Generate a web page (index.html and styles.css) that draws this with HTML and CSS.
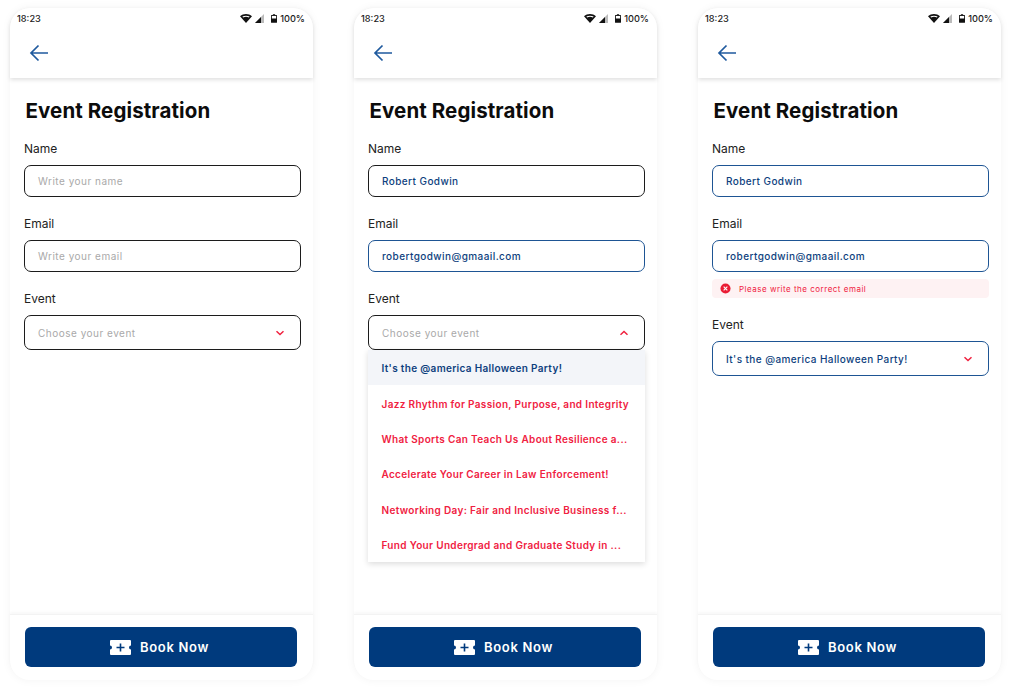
FILE: index.html
```html
<!DOCTYPE html>
<html lang="en">
<head>
<meta charset="utf-8">
<title>Event Registration</title>
<link rel="stylesheet" href="styles.css">
</head>
<body>
<svg class="defs" width="0" height="0" aria-hidden="true">
  <symbol id="wifi" viewBox="0 0 12 9"><path d="M0 2.2C3.4-.7 8.6-.7 12 2.2L6 9z" fill="#111"/><path d="M2.400 2.600c2.200-1.200 5-1.200 7.200 0l-.7.800C7 2.600 5 2.600 3.100 3.400z" fill="#fff"/></symbol>
  <symbol id="signal" viewBox="0 0 9 9"><path d="M9 0v9H0z" fill="#bbb"/><path d="M6 3v6H0z" fill="#111"/></symbol>
  <symbol id="battery" viewBox="0 0 7 10"><path d="M2.200 0h2.600v1H6.300a.7.7 0 0 1 .7.700v7.600a.7.7 0 0 1-.7.700H.7A.7.7 0 0 1 0 9.300V1.700A.7.7 0 0 1 .7 1h1.500z" fill="#111"/><rect x="1" y="2" width="5" height="3" fill="#fff"/></symbol>
  <symbol id="ticket" viewBox="0 0 21 15"><path d="M1 0h19a1 1 0 0 1 1 1v4.500a2 2 0 0 0 0 4V14a1 1 0 0 1-1 1H1a1 1 0 0 1-1-1V9.500a2 2 0 0 0 0-4V1a1 1 0 0 1 1-1z" fill="#fff"/><path d="M10.500 3.500v8M6.500 7.500h8" stroke="#003a7d" stroke-width="1.600" fill="none"/></symbol>
  <symbol id="back" viewBox="0 0 20 18"><path d="M19 9H2M9.500 1.500 2 9l7.500 7.500" stroke="#1f5a9e" stroke-width="1.700" fill="none"/></symbol>
  <symbol id="down" viewBox="0 0 10 6"><path d="M1.500 1.200 5 4.500 8.500 1.200" stroke="#f0213f" stroke-width="1.500" fill="none"/></symbol>
  <symbol id="up" viewBox="0 0 10 6"><path d="M1.500 4.800 5 1.500 8.500 4.800" stroke="#f0213f" stroke-width="1.500" fill="none"/></symbol>
  <symbol id="err" viewBox="0 0 12 12"><circle cx="6" cy="6" r="5.500" fill="#ea1c34"/><path d="M4 4l4 4M8 4l-4 4" stroke="#fff" stroke-width="1.200"/></symbol>
</svg>

<main class="screens">

  <section class="phone">
    <div class="top">
      <div class="status"><span>18:23</span><span class="status-icons"><svg class="i-wifi"><use href="#wifi"/></svg><svg class="i-signal"><use href="#signal"/></svg><svg class="i-bat"><use href="#battery"/></svg><span>100%</span></span></div>
      <div class="nav"><svg class="i-back"><use href="#back"/></svg></div>
    </div>
    <div class="body">
      <h1>Event Registration</h1>
      <div class="field"><div class="label">Name</div><div class="input"><span class="ph">Write your name</span></div></div>
      <div class="field"><div class="label">Email</div><div class="input"><span class="ph">Write your email</span></div></div>
      <div class="field"><div class="label">Event</div><div class="input select"><span class="ph">Choose your event</span><svg class="i-chev"><use href="#down"/></svg></div></div>
    </div>
    <div class="foot"><div class="btn"><svg class="i-ticket"><use href="#ticket"/></svg><span>Book Now</span></div></div>
  </section>

  <section class="phone">
    <div class="top">
      <div class="status"><span>18:23</span><span class="status-icons"><svg class="i-wifi"><use href="#wifi"/></svg><svg class="i-signal"><use href="#signal"/></svg><svg class="i-bat"><use href="#battery"/></svg><span>100%</span></span></div>
      <div class="nav"><svg class="i-back"><use href="#back"/></svg></div>
    </div>
    <div class="body">
      <h1>Event Registration</h1>
      <div class="field"><div class="label">Name</div><div class="input"><span class="val">Robert Godwin</span></div></div>
      <div class="field"><div class="label">Email</div><div class="input blue"><span class="val">robertgodwin@gmaail.com</span></div></div>
      <div class="field drop-wrap"><div class="label">Event</div><div class="input select"><span class="ph">Choose your event</span><svg class="i-chev"><use href="#up"/></svg></div>
        <ul class="drop">
          <li class="on">It's the @america Halloween Party!</li>
          <li>Jazz Rhythm for Passion, Purpose, and Integrity</li>
          <li>What Sports Can Teach Us About Resilience a...</li>
          <li>Accelerate Your Career in Law Enforcement!</li>
          <li>Networking Day: Fair and Inclusive Business f...</li>
          <li>Fund Your Undergrad and Graduate Study in ...</li>
        </ul>
      </div>
    </div>
    <div class="foot"><div class="btn"><svg class="i-ticket"><use href="#ticket"/></svg><span>Book Now</span></div></div>
  </section>

  <section class="phone">
    <div class="top">
      <div class="status"><span>18:23</span><span class="status-icons"><svg class="i-wifi"><use href="#wifi"/></svg><svg class="i-signal"><use href="#signal"/></svg><svg class="i-bat"><use href="#battery"/></svg><span>100%</span></span></div>
      <div class="nav"><svg class="i-back"><use href="#back"/></svg></div>
    </div>
    <div class="body">
      <h1>Event Registration</h1>
      <div class="field"><div class="label">Name</div><div class="input blue"><span class="val">Robert Godwin</span></div></div>
      <div class="field"><div class="label">Email</div><div class="input blue"><span class="val">robertgodwin@gmaail.com</span></div>
        <div class="error"><svg class="i-err"><use href="#err"/></svg><span>Please write the correct email</span></div></div>
      <div class="field"><div class="label">Event</div><div class="input select blue"><span class="val">It's the @america Halloween Party!</span><svg class="i-chev"><use href="#down"/></svg></div></div>
    </div>
    <div class="foot"><div class="btn"><svg class="i-ticket"><use href="#ticket"/></svg><span>Book Now</span></div></div>
  </section>

</main>
</body>
</html>
```
FILE: styles.css
```css
* { box-sizing: border-box; }
html, body { margin: 0; padding: 0; background: #fff; }
body { width: 1010px; height: 692px; overflow: hidden; font-family: Inter, "Liberation Sans", sans-serif; color: #1a1a1a; }
.defs { display: block; height: 0; }
.screens { display: flex; gap: 41px; padding: 8px 0 0 10px; }
.phone { width: 303px; height: 672px; background: #fff; border-radius: 20px; box-shadow: 0 0 10px rgba(0,0,0,.05); display: flex; flex-direction: column; }
.top { height: 70px; background: #fff; border-radius: 20px 20px 0 0; box-shadow: 0 2px 4px rgba(0,0,0,.12); flex: none; }
.status { display: flex; justify-content: space-between; align-items: center; height: 21px; padding: 0 8px 0 7px; font-size: 9.200px; font-weight: 500; color: #222; }
.status-icons { display: flex; align-items: center; }
.i-wifi { width: 12px; height: 9px; margin-right: 3px; }
.i-signal { width: 9px; height: 9px; margin-right: 7px; }
.i-bat { width: 6px; height: 9px; margin-right: 3px; }
.nav { padding: 15px 0 0 19px; display: flex; }
.i-back { width: 20px; height: 18px; }
.body { flex: 1; padding: 20.500px 12px 0 14px; }
h1 { margin: 0 0 18.500px 1.500px; font-size: 20.500px; line-height: 24px; font-weight: 700; color: #0c0c0c; letter-spacing: .1px; }
.field { margin-bottom: 19px; position: relative; }
.label { font-size: 12px; line-height: 16px; margin-bottom: 8px; color: #222; }
.input { height: 32px; border: 1px solid #1c1c1c; border-radius: 7px; display: flex; align-items: center; padding: 0 13px; font-size: 10px; background: #fff; letter-spacing: .42px; }
.input.select { height: 35px; justify-content: space-between; padding-right: 15px; }
.input.blue { border-color: #1e5594; }
.ph { color: #a9a9a9; letter-spacing: .5px; }
.val { color: #0e3f7e; font-weight: 500; }
.i-chev { width: 10px; height: 6px; }
.drop { position: absolute; left: 0; right: 0; top: 59px; margin: 0; padding: 0; list-style: none; background: #fff; box-shadow: 0 2px 6px rgba(0,0,0,.14); z-index: 2; }
.drop li { height: 35.400px; display: flex; align-items: center; padding: 1px 0 0 13.500px; font-size: 10px; font-weight: 600; color: #f0213f; letter-spacing: .33px; white-space: nowrap; }
.drop li.on { background: #f3f5f9; color: #0e3f7e; }
.error { margin: 7px 0 .5px; height: 19px; background: #fef2f3; border-radius: 4px; display: flex; align-items: center; padding-left: 8px; gap: 8px; font-size: 8px; color: #f0213f; letter-spacing: .5px; }
.i-err { width: 11px; height: 11px; }
.foot { height: 66px; flex: none; padding: 12px 16px 0 15px; border-top: 1px solid #f3f3f3; box-shadow: 0 -2px 3px rgba(0,0,0,.03); border-radius: 0 0 20px 20px; }
.btn { height: 40px; background: #003a7d; border-radius: 6px; display: flex; align-items: center; justify-content: center; gap: 9px; color: #fff; font-size: 13px; font-weight: 600; letter-spacing: .7px; padding-right: 3px; }
.i-ticket { width: 21px; height: 15px; }
```
